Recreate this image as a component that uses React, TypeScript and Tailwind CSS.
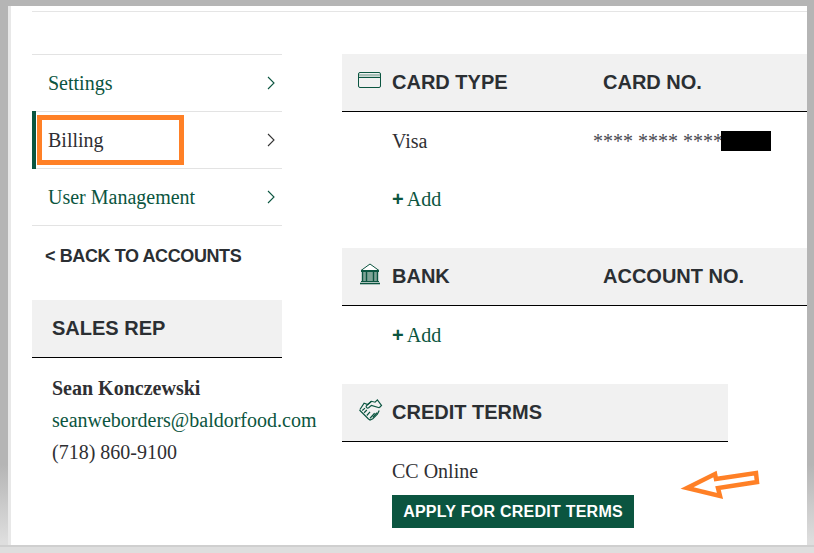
const serif = "font-['Liberation_Serif',serif]";
const sans = "font-['Liberation_Sans',sans-serif]";

const CardIcon = () => (
  <svg width="23" height="17" viewBox="0 0 23 17" fill="none" stroke="#0b5540" className="-mt-[3px] shrink-0">
    <rect x="0.5" y="0.5" width="22" height="15" rx="1.5" />
    <rect x="1" y="2" width="21" height="2.5" fill="#a9c0b8" stroke="none" />
    <path d="M1 5.5h21" />
  </svg>
);

const BankIcon = () => (
  <svg width="22" height="22" viewBox="0 0 22 22" fill="none" stroke="#0b5540" className="-mt-[4px] ml-[1px] shrink-0">
    <path d="M2 7.5 11 1l9 6.5z" fill="#fff" />
    <rect x="3" y="8" width="16" height="10" fill="#7fa396" stroke="none" />
    <path d="M3.5 8v10M7.5 8v10M14.5 8v10M18.5 8v10" strokeWidth="1.4" />
    <path d="M2 8.5h18M2 18.5h18" />
    <path d="M1 20.5h20" strokeWidth="1.6" />
  </svg>
);

const HandshakeIcon = () => (
  <svg width="25" height="22" viewBox="0 0 26 24" fill="none" stroke="#0b5540" strokeWidth="1.3" className="-mt-[4px] shrink-0">
    <path d="M1.5 11.5 6 4.5 10 6l4-3.5 4 1L20.5 1l4.5 6-2.5 2.5" />
    <path d="M14 2.5 8.5 7.5c-1 1.5 1 3 2.5 2l3-2.5 8.5 2.5" />
    <path d="M1 12l9.5 9.5 2 1.5 3-1.5 5-5 2-4" />
    <path d="M4 12.5l3-2.5M6 15l3-3M9 18l3.5-4M12.5 21l5-5.5M15.5 20l4.5-5" />
  </svg>
);

const Chevron = ({ color }: { color: string }) => (
  <svg width="8" height="14" viewBox="0 0 8 14" fill="none" stroke={color} strokeWidth="1.1">
    <path d="M1 1l6 6-6 6" />
  </svg>
);

const NavRow = ({ label, active }: { label: string; active?: boolean }) => (
  <div
    className={`flex h-[57px] items-center justify-between border-b border-[#e3e3e3] pr-[7px] pl-[16px] text-[20px] ${
      active ? "text-[#2f2f33]" : "text-[#0b5540]"
    }`}
  >
    <span>{label}</span>
    <Chevron color={active ? "#333333" : "#0b5540"} />
  </div>
);

const SectionHead = ({
  icon,
  title,
  second,
  className = "",
}: {
  icon: React.ReactNode;
  title: string;
  second?: string;
  className?: string;
}) => (
  <div
    className={`flex h-[58px] items-center border-b border-black bg-[#f1f1f1] pb-[2px] pl-[16px] ${sans} text-[20px] leading-none font-bold text-[#2b2f33] ${className}`}
  >
    <span className="flex w-[34px] justify-start">{icon}</span>
    <span className="w-[211px]">{title}</span>
    {second && <span>{second}</span>}
  </div>
);

const AddLink = () => (
  <div className="flex items-center gap-[3px] pl-[50px] text-[20px] leading-none text-[#0b5540]">
    <span className={`${sans} font-bold`}>+</span>
    <span>Add</span>
  </div>
);

export default function App() {
  return (
    <div className={`h-[553px] w-[814px] overflow-hidden bg-[linear-gradient(to_bottom,#b5b5b5_84%,#dedede_98%)] ${serif}`}>
      <div className="relative mt-0 mr-[7px] ml-[8px] h-[545px] border-t-[6px] border-t-[#b5b5b5]">
        <div className="h-full border-l-[3px] border-[#e8e8e8] bg-white pt-[5px] pl-[21px]">
          <div className="border-t border-[#e5e5e5]" />
          <div className="mt-[42px] flex gap-[60px]">
            <aside className="w-[250px] shrink-0">
              <div className="border-t border-[#e3e3e3]">
                <NavRow label="Settings" />
                <div className="relative">
                  <NavRow label="Billing" active />
                  <span className="absolute top-[-1px] left-0 h-[58px] w-[4px] bg-[#0b5540]" />
                </div>
                <NavRow label="User Management" />
              </div>
              <div className={`mt-[18px] pl-[13px] ${sans} text-[18px] leading-[24px] font-bold tracking-[-0.4px] text-[#2b2f33]`}>
                &lt; BACK TO ACCOUNTS
              </div>
              <div className={`mt-[32px] flex h-[58px] items-center border-b border-black bg-[#f1f1f1] pb-[2px] pl-[20px] ${sans} text-[20px] font-bold text-[#2b2f33]`}>
                SALES REP
              </div>
              <div className="mt-[14px] pl-[20px] text-[20px] leading-[32px] whitespace-nowrap text-[#2f2f33]">
                <div className="font-bold">Sean Konczewski</div>
                <div className="text-[#0b5540]">seanweborders@baldorfood.com</div>
                <div>(718) 860-9100</div>
              </div>
            </aside>

            <main className="min-w-0 flex-1">
              <SectionHead icon={<CardIcon />} title="CARD TYPE" second="CARD NO." />
              <div className="flex h-[58px] items-center pl-[50px] text-[20px] leading-none text-[#2f2f33]">
                <span className="w-[201px]">Visa</span>
                <span className="whitespace-nowrap text-[#4a4a52]">**** **** ****</span>
              </div>
              <div className="flex h-[58px] items-center">
                <AddLink />
              </div>
              <div className="h-[20px]" />
              <SectionHead icon={<BankIcon />} title="BANK" second="ACCOUNT NO." />
              <div className="flex h-[58px] items-center">
                <AddLink />
              </div>
              <div className="h-[20px]" />
              <SectionHead icon={<HandshakeIcon />} title="CREDIT TERMS" className="w-[386px]" />
              <div className="pt-[17px] pl-[50px]">
                <div className="text-[20px] leading-[24px] text-[#2f2f33]">CC Online</div>
                <div className={`mt-[12px] flex h-[33px] w-[242px] items-center justify-center bg-[#0b5540] ${sans} text-[16px] font-bold tracking-[0.25px] text-white`}>
                  APPLY FOR CREDIT TERMS
                </div>
              </div>
            </main>
          </div>
        </div>

        {/* redaction + annotations drawn on top of the screenshot */}
        <div className="absolute top-[125px] left-[713px] h-[20px] w-[50px] bg-black" />
        <div className="absolute top-[109px] left-[29px] h-[50px] w-[147px] border-[5px] border-[#ff8026]" />
        <svg className="absolute top-[459px] left-[670px]" width="84" height="36" viewBox="0 0 84 36" fill="none" stroke="#ff8026" strokeWidth="4.5">
          <path d="M9 23 37 9l1 5 40-6 1 9-39 6 2 8z" />
        </svg>
      </div>
      <div className="h-[8px] border-t-2 border-[#cfcfcf] bg-[#dedede]" />
    </div>
  );
}
